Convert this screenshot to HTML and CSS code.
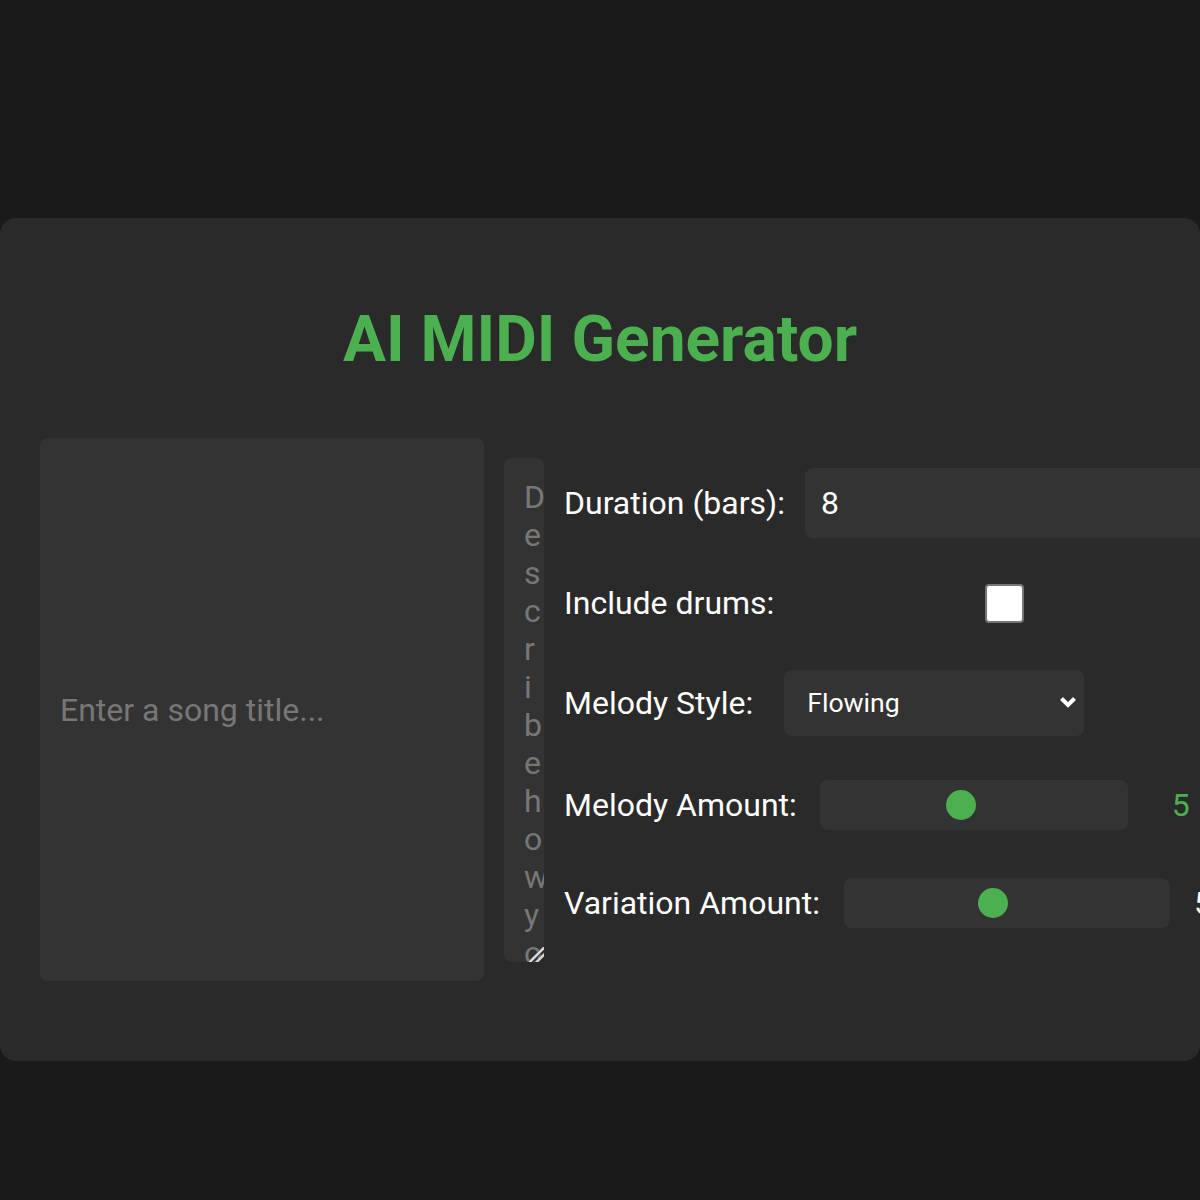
FILE: index.html
```html
<!DOCTYPE html>
<html lang="en">
    <head>
        <meta charset="UTF-8">
        <meta name="viewport" content="width=device-width, initial-scale=1.0">
        <title>AI MIDI Generator</title>
        <link rel="stylesheet" href="styles.css">
    </head>
    <body>
        <main class="painel">
            <h1 class="titulo">AI MIDI Generator</h1>

            <section class="area-trabalho">
                <input type="text" id="nome_musica" class="nome-musica" placeholder="Enter a song title...">
                <textarea id="descricao" class="descricao" placeholder="Describe how you want your song to sound..."></textarea>

                <div class="opcoes">
                    <div class="linha">
                        <label for="compassos">Duration (bars):</label>
                        <input type="number" id="compassos" class="campo-numero" value="8" min="1" max="64">
                    </div>
                    <div class="linha">
                        <label for="bateria">Include drums:</label>
                        <input type="checkbox" id="bateria" class="caixa">
                    </div>
                    <div class="linha">
                        <label for="estilo">Melody Style:</label>
                        <div class="seletor">
                            <select id="estilo" class="estilo">
                                <option>Flowing</option>
                                <option>Rhythmic</option>
                                <option>Sparse</option>
                            </select>
                            <svg class="seta" width="18" height="12" viewBox="0 0 18 12">
                                <path d="M2.5 2.5 L9 9 L15.5 2.5" fill="none" stroke="#fff" stroke-width="4"/>
                            </svg>
                        </div>
                    </div>
                    <div class="linha linha-melodia">
                        <label for="melodia">Melody Amount:</label>
                        <input type="range" id="melodia" class="slider slider-melodia" min="1" max="10" value="5">
                        <span class="valor valor-melodia">5</span>
                    </div>
                    <div class="linha">
                        <label for="variacao">Variation Amount:</label>
                        <input type="range" id="variacao" class="slider slider-variacao" min="1" max="10" value="5">
                        <span class="valor valor-variacao">5</span>
                    </div>
                </div>
            </section>
        </main>
    </body>
</html>
```

FILE: styles.css
```css
* {
    padding: 0px;
    margin: 0px;
    box-sizing: border-box;
    outline: 0;
    font-family: Roboto, "Liberation Sans", sans-serif;
}

body {
    background-color: #1a1a1a;
    color: #fff;
    padding-top: 218px;
    overflow: hidden;
}

.painel {
    width: 1200px;
    height: 843px;
    background-color: #2a2a2a;
    border-radius: 16px;
    padding: 0 40px;
}

.titulo {
    color: #4caf50;
    font-size: 64px;
    font-weight: 700;
    line-height: 80px;
    text-align: center;
    padding-top: 82px;
    margin-bottom: 58px;
}

.area-trabalho {
    display: flex;
    align-items: flex-start;
}

.nome-musica {
    flex: none;
    width: 444px;
    height: 543px;
    padding: 0 20px;
    background-color: #333;
    color: #fff;
    border: none;
    border-radius: 8px;
    font-size: 32px;
}

.nome-musica::placeholder,
.descricao::placeholder {
    color: #777;
}

.descricao {
    flex: none;
    width: 40px;
    height: 504px;
    margin: 20px;
    padding: 20px;
    background-color: #333;
    color: #fff;
    border: none;
    border-radius: 8px;
    font-size: 32px;
    overflow: hidden;
}

.descricao::-webkit-scrollbar {
    width: 19px;
    height: 19px;
}

/* puxador com duas riscas na diagonal */
.descricao::-webkit-resizer {
    background: linear-gradient(135deg,
        transparent 44%, #222 44%, #ddd 49%, #ddd 56%, #222 61%,
        transparent 64%, transparent 67%, #222 67%, #ddd 72%, #ddd 79%, #222 84%,
        transparent 87%);
}

.opcoes {
    padding-top: 30px;
}

.linha {
    display: flex;
    align-items: center;
    height: 70px;
    margin-bottom: 30px;
    font-size: 32px;
    white-space: nowrap;
}

.linha-melodia {
    margin-top: 32px;
    margin-bottom: 28px;
}

.campo-numero {
    flex: none;
    width: 420px;
    height: 70px;
    margin-left: 20px;
    padding: 0 16px;
    background-color: #333;
    color: #fff;
    border: none;
    border-radius: 8px;
    font-size: 32px;
}

.caixa {
    appearance: none;
    width: 39px;
    height: 39px;
    margin-left: 211px;
    background-color: #fff;
    border: 2px solid #767676;
    border-radius: 4px;
}

.seletor {
    position: relative;
    margin-left: 31px;
}

.estilo {
    display: block;
    appearance: none;
    width: 300px;
    height: 66px;
    padding: 0 20px 0 23px;
    background-color: #333;
    color: #fff;
    border: none;
    border-radius: 8px;
    font-size: 26.67px;
}

.seta {
    position: absolute;
    right: 7px;
    top: 26px;
    pointer-events: none;
}

.slider {
    appearance: none;
    height: 50px;
    margin-left: 23px;
    padding-left: 5px;
    background-color: #333;
    border-radius: 8px;
}

.slider::-webkit-slider-thumb {
    appearance: none;
    width: 30px;
    height: 30px;
    border-radius: 50%;
    background-color: #4caf50;
}

.slider-melodia {
    width: 308px;
}

.slider-variacao {
    width: 326px;
    margin-left: 24px;
}

.valor-melodia {
    margin-left: 44px;
    color: #4caf50;
}

.valor-variacao {
    margin-left: 24px;
}
```
